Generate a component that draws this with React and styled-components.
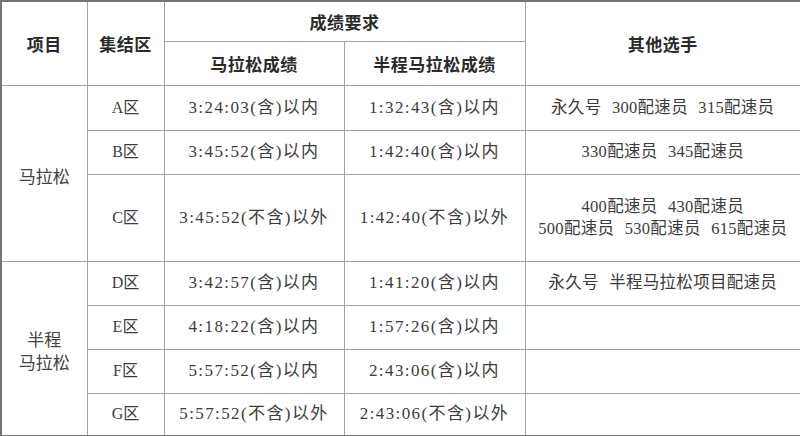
import React from "react";
import styled, { createGlobalStyle } from "styled-components";

const Global = createGlobalStyle`
  html, body { margin: 0; padding: 0; background: #fff; }
  body { width: 800px; height: 436px; overflow: hidden; }
`;

const Table = styled.table`
  width: 800px;
  height: 436px;
  border-collapse: collapse;
  table-layout: fixed;
  border: 2px solid #747474;
  font-family: "Liberation Serif", "Noto Sans CJK SC", serif;
  color: #3c3c3c;
`;

const Col = styled.col`
  width: ${(p) => p.$w}px;
`;

const Row = styled.tr`
  height: ${(p) => p.$h}px;
`;

const Th = styled.th`
  border: 1px solid #a3a3a3;
  padding: 0;
  text-align: center;
  vertical-align: middle;
  font-family: "Noto Sans CJK SC", sans-serif;
  font-weight: 700;
  font-size: 17px;
  color: #2a2a2a;
  letter-spacing: 0.5px;
`;

const Td = styled.td`
  border: 1px solid #a3a3a3;
  padding: 0;
  text-align: center;
  vertical-align: middle;
  font-size: 16px;
  line-height: 22px;
`;

const Group = styled(Td)`
  font-family: "Noto Sans CJK SC", sans-serif;
  font-size: 17px;
  line-height: 23px;
  color: #444;
  padding-top: 4px;
`;

const Zone = styled(Td)`
  font-size: 16px;
`;

const Time = styled(Td)`
  font-size: 17px;
  letter-spacing: 1.4px;
`;

const Pacer = styled(Td)`
  font-size: 16.5px;
  letter-spacing: 0.3px;
  word-spacing: 6px;
`;

const rows = [
  { zone: "A区", full: "3:24:03(含)以内", half: "1:32:43(含)以内", pacer: ["永久号 300配速员 315配速员"], h: 45 },
  { zone: "B区", full: "3:45:52(含)以内", half: "1:42:40(含)以内", pacer: ["330配速员 345配速员"], h: 44 },
  { zone: "C区", full: "3:45:52(不含)以外", half: "1:42:40(不含)以外", pacer: ["400配速员 430配速员", "500配速员 530配速员 615配速员"], h: 87 },
  { zone: "D区", full: "3:42:57(含)以内", half: "1:41:20(含)以内", pacer: ["永久号 半程马拉松项目配速员"], h: 44 },
  { zone: "E区", full: "4:18:22(含)以内", half: "1:57:26(含)以内", pacer: [], h: 44 },
  { zone: "F区", full: "5:57:52(含)以内", half: "2:43:06(含)以内", pacer: [], h: 44 },
  { zone: "G区", full: "5:57:52(不含)以外", half: "2:43:06(不含)以外", pacer: [], h: 43 },
];

export default function App() {
  return (
    <>
      <Global />
      <Table>
        <colgroup>
          <Col $w={86} />
          <Col $w={77} />
          <Col $w={180} />
          <Col $w={181} />
          <Col $w={276} />
        </colgroup>
        <thead>
          <Row $h={40}>
            <Th rowSpan={2}>项目</Th>
            <Th rowSpan={2}>集结区</Th>
            <Th colSpan={2}>成绩要求</Th>
            <Th rowSpan={2}>其他选手</Th>
          </Row>
          <Row $h={44}>
            <Th>马拉松成绩</Th>
            <Th>半程马拉松成绩</Th>
          </Row>
        </thead>
        <tbody>
          {rows.map((r, i) => (
            <Row key={r.zone} $h={r.h}>
              {i === 0 && <Group rowSpan={3}>马拉松</Group>}
              {i === 3 && (
                <Group rowSpan={4}>
                  半程
                  <br />
                  马拉松
                </Group>
              )}
              <Zone>{r.zone}</Zone>
              <Time>{r.full}</Time>
              <Time>{r.half}</Time>
              <Pacer>
                {r.pacer.map((l, j) => (
                  <React.Fragment key={j}>
                    {j > 0 && <br />}
                    {l}
                  </React.Fragment>
                ))}
              </Pacer>
            </Row>
          ))}
        </tbody>
      </Table>
    </>
  );
}
